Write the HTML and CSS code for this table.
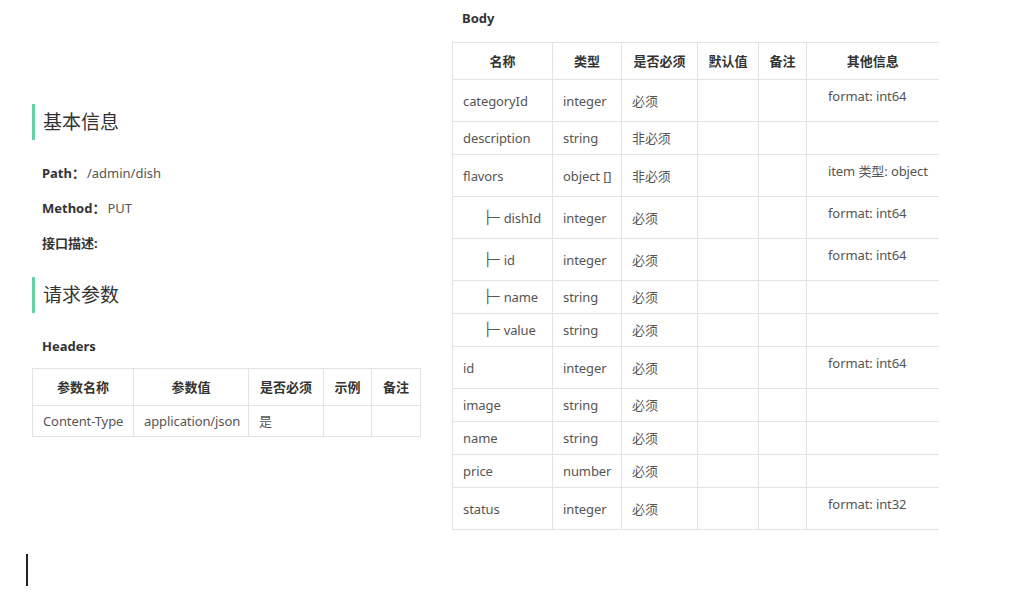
FILE: index.html
```html
<!DOCTYPE html>
<html lang="zh">
<head>
<meta charset="utf-8">
<title>API</title>
<link rel="stylesheet" href="styles.css">
</head>
<body>
<div class="page">
  <div class="left">
    <h2 class="sec-title first">基本信息</h2>
    <p class="kv"><b>Path：</b><span class="val">/admin/dish</span></p>
    <p class="kv"><b>Method：</b><span class="val">PUT</span></p>
    <p class="kv"><b>接口描述:</b></p>
    <h2 class="sec-title">请求参数</h2>
    <p class="kv sub"><b>Headers</b></p>
    <table class="tbl hdr">
      <colgroup><col style="width:101px"><col style="width:115px"><col style="width:75px"><col style="width:48px"><col style="width:49px"></colgroup>
      <thead><tr><th>参数名称</th><th>参数值</th><th>是否必须</th><th>示例</th><th>备注</th></tr></thead>
      <tbody><tr><td>Content-Type</td><td>application/json</td><td>是</td><td></td><td></td></tr></tbody>
    </table>
  </div>
  <div class="right">
    <p class="kv body-label"><b>Body</b></p>
    <table class="tbl body">
      <colgroup><col style="width:100px"><col style="width:69px"><col style="width:76px"><col style="width:61px"><col style="width:48px"><col style="width:132px"></colgroup>
      <thead><tr><th>名称</th><th>类型</th><th>是否必须</th><th>默认值</th><th>备注</th><th>其他信息</th></tr></thead>
      <tbody>
        <tr><td>categoryId</td><td>integer</td><td>必须</td><td></td><td></td><td class="info"><div class="note">format: int64</div></td></tr>
        <tr><td>description</td><td>string</td><td>非必须</td><td></td><td></td><td class="info"></td></tr>
        <tr><td>flavors</td><td>object []</td><td>非必须</td><td></td><td></td><td class="info"><div class="note">item 类型: object</div></td></tr>
        <tr><td><span class="tree">├─</span>dishId</td><td>integer</td><td>必须</td><td></td><td></td><td class="info"><div class="note">format: int64</div></td></tr>
        <tr><td><span class="tree">├─</span>id</td><td>integer</td><td>必须</td><td></td><td></td><td class="info"><div class="note">format: int64</div></td></tr>
        <tr><td><span class="tree">├─</span>name</td><td>string</td><td>必须</td><td></td><td></td><td class="info"></td></tr>
        <tr><td><span class="tree">├─</span>value</td><td>string</td><td>必须</td><td></td><td></td><td class="info"></td></tr>
        <tr><td>id</td><td>integer</td><td>必须</td><td></td><td></td><td class="info"><div class="note">format: int64</div></td></tr>
        <tr><td>image</td><td>string</td><td>必须</td><td></td><td></td><td class="info"></td></tr>
        <tr><td>name</td><td>string</td><td>必须</td><td></td><td></td><td class="info"></td></tr>
        <tr><td>price</td><td>number</td><td>必须</td><td></td><td></td><td class="info"></td></tr>
        <tr><td>status</td><td>integer</td><td>必须</td><td></td><td></td><td class="info"><div class="note">format: int32</div></td></tr>
      </tbody>
    </table>
  </div>
  <div class="cursor"></div>
</div>
</body>
</html>
```

FILE: styles.css
```css
html, body {
  margin: 0;
  padding: 0;
  background: #fff;
}
body {
  font-family: "Noto Sans", "Noto Sans CJK SC", sans-serif;
  font-size: 13px;
  color: #555;
}
.page {
  position: relative;
  width: 1024px;
  height: 605px;
  display: flex;
  align-items: flex-start;
  gap: 32px;
  box-sizing: border-box;
  padding-left: 32px;
}
.left {
  width: 388px;
  padding-top: 104px;
}
.right {
  width: 486px;
  padding-top: 8px;
}
.sec-title {
  margin: 0;
  height: 36px;
  line-height: 36px;
  border-left: 3px solid #62d2a2;
  padding-left: 8px;
  font-size: 19px;
  font-weight: normal;
  color: #333;
}
.sec-title:not(.first) {
  margin-top: 24px;
}
.kv {
  margin: 0;
  line-height: 20px;
  padding-left: 10px;
  color: #555;
}
.kv b {
  color: #333;
  font-weight: bold;
}
.kv .val {
  margin-left: 2px;
}
.first + .kv {
  margin-top: 23px;
}
.kv + .kv {
  margin-top: 15px;
}
.kv.kv.sub {
  margin-top: 23px;
}
.left .tbl {
  margin-top: 12px;
}
.right .tbl {
  margin-top: 14px;
}
.tbl {
  border-collapse: collapse;
  table-layout: fixed;
  letter-spacing: -0.1px;
}
.tbl.hdr { width: 388px; }
.tbl.body { width: 486px; }
.tbl th, .tbl td {
  border: 1px solid #e3e3e3;
  line-height: 18px;
  white-space: nowrap;
  overflow: hidden;
}
.tbl th {
  padding: 9px 4px;
  font-weight: bold;
  color: #333;
  text-align: center;
  letter-spacing: 0;
}
.tbl.hdr tbody td {
  padding-top: 6px;
  padding-bottom: 6px;
}
.tbl td {
  padding: 7px 10px;
  text-align: left;
  vertical-align: middle;
  color: #555;
}
.tbl.body th:last-child,
.tbl.body td:last-child {
  border-right: none;
}
.tbl td.info {
  vertical-align: top;
  padding-left: 21px;
}
.note {
  margin-bottom: 9px;
}
.tree {
  display: inline-block;
  height: 18px;
  line-height: 18px;
  vertical-align: top;
  overflow: hidden;
  font-family: "DejaVu Sans", sans-serif;
  margin-left: 21px;
  margin-right: 4px;
  color: #555;
  letter-spacing: 0;
}
.cursor {
  position: absolute;
  left: 26px;
  top: 554px;
  width: 2px;
  height: 32px;
  background: #222;
}
```
